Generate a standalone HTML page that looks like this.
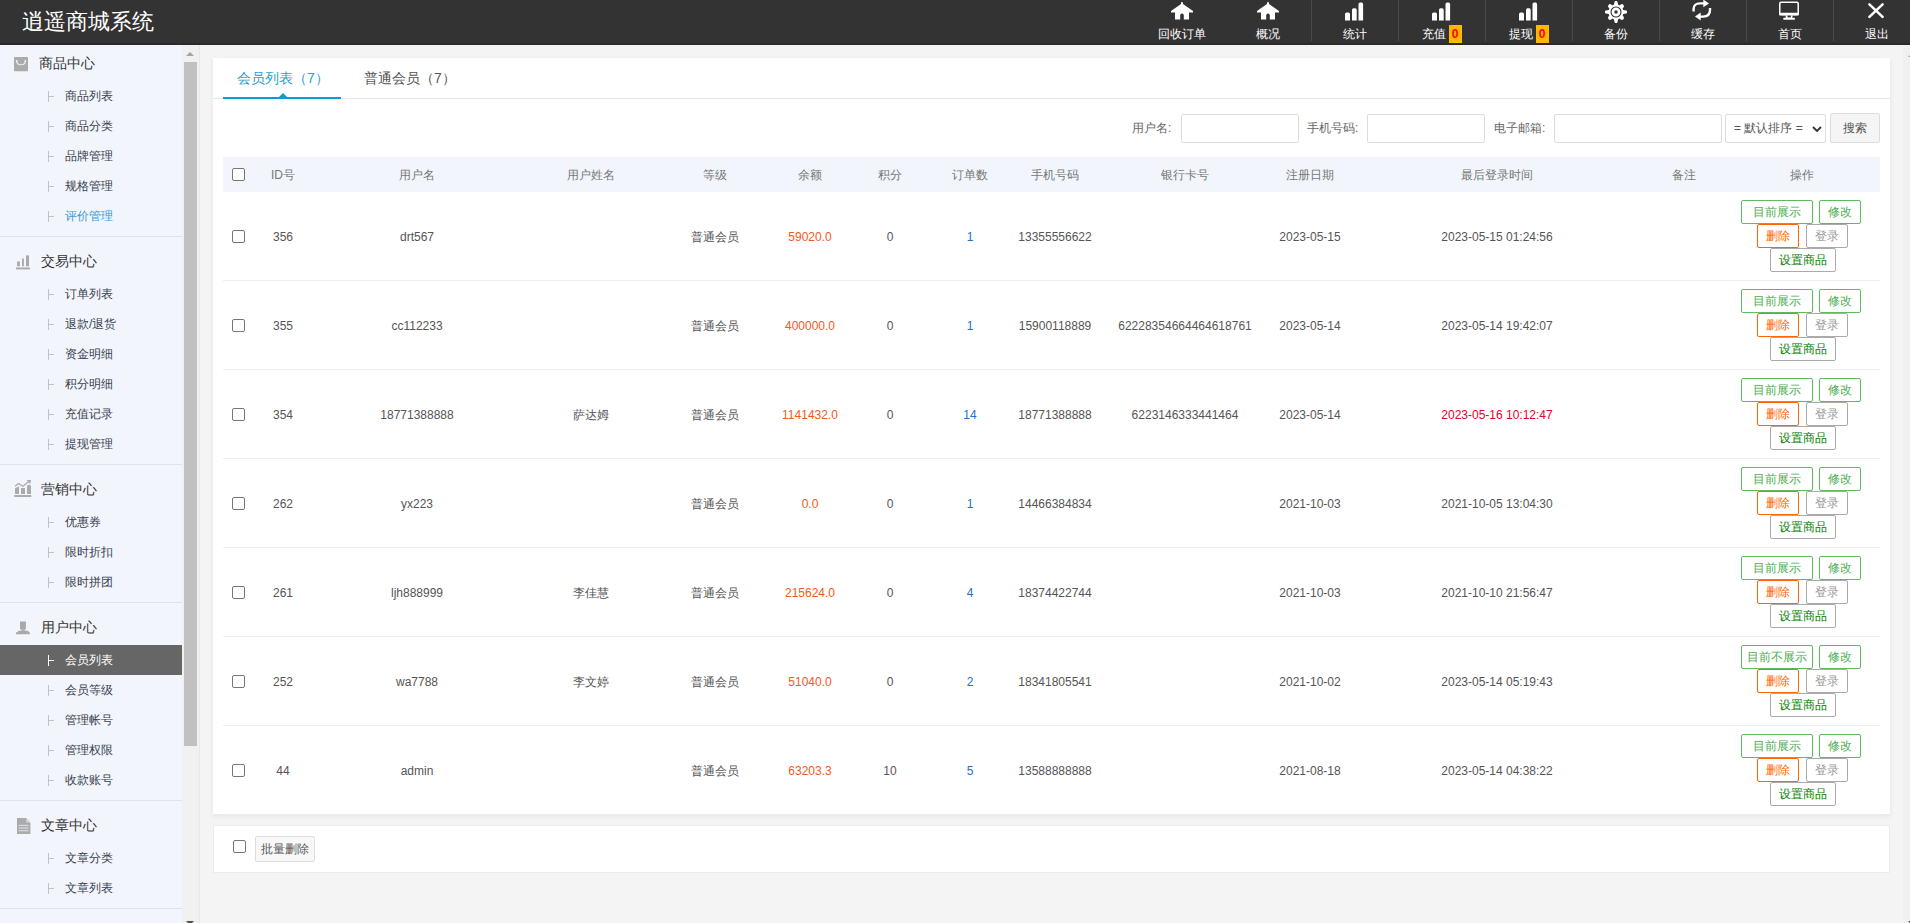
<!DOCTYPE html>
<html><head><meta charset="utf-8">
<style>
*{margin:0;padding:0;box-sizing:border-box}
html,body{width:1910px;height:923px;overflow:hidden;background:#f4f4f4;font-family:"Liberation Sans",sans-serif;font-size:12px;color:#555}
#hd{position:absolute;left:0;top:0;width:1910px;height:45px;background:#333;border-bottom:2px solid #2a2a2a}
#logo{position:absolute;left:22px;top:7px;font-size:22px;line-height:30px;color:#fff;letter-spacing:0}
.nv{position:absolute;top:0;width:87px;height:45px;text-align:center;color:#fff}
.nv .ic{position:absolute;left:0;top:0;width:87px;height:24px}
.nv .tx{position:absolute;left:0;top:26px;width:87px;font-size:12px;line-height:16px;color:#fff}
.nv .bd{display:inline-block;width:13px;height:18px;background:#ffb800;color:#f00;font-size:12px;line-height:19px;text-align:center;vertical-align:middle;margin-left:3px;position:relative;top:-1px}
.sep{position:absolute;top:0;width:1px;height:41px;background:#4a4a4a}
#sb{position:absolute;left:0;top:45px;width:182px;height:878px;background:#f2f5fc;overflow:hidden}
#sbin{position:absolute;left:0;top:-6px;width:182px}
.grp{border-bottom:1px solid #dde3ee;padding-bottom:5px}
.gh{position:relative;height:42px}
.gh .gi{position:absolute;left:14px;top:18px;width:16px;height:15px}
.gh .gt{position:absolute;left:41px;top:14px;font-size:14px;line-height:20px;color:#333}
.it{position:relative;height:30px;line-height:30px;color:#39414f;font-size:12px}
.it .tr{position:absolute;left:48px;top:10px;width:1px;height:11px;background:#c2c2c2}
.it .tr:after{content:'';position:absolute;left:1px;top:5px;width:5px;height:1px;background:#c2c2c2}
.it .tt{position:absolute;left:65px;top:0}
.it.on{background:#666;color:#fff}
.it.on .tr,.it.on .tr:after{background:#fff}
.it.bl .tt{color:#3a9bd9}
#sbtrack{position:absolute;left:182px;top:45px;width:17px;height:878px;background:#f1f1f1}
#sbthumb{position:absolute;left:184px;top:62px;width:13px;height:684px;background:#c1c1c1}
#sbline{position:absolute;left:199px;top:45px;width:1px;height:878px;background:#e3e8f1}
#rtrack{position:absolute;left:1903px;top:45px;width:7px;height:878px;background:#f0f0f0}
.card{position:absolute;left:213px;width:1677px;background:#fff;box-shadow:0 1px 3px rgba(0,0,0,.06)}
#c1{top:58px;height:756px}
#c2{top:825px;height:48px}
.tabs{position:absolute;left:0;top:0;width:1677px;height:41px;border-bottom:1px solid #e6e6e6}
.tab{position:absolute;top:10px;font-size:14px;line-height:20px;color:#555}
.tab.on{color:#1e9fd6}
.tabline{position:absolute;left:10px;top:39px;width:118px;height:2px;background:#0e9ad4}
.tabtri{position:absolute;left:65.5px;top:35px;width:0;height:0;border-left:4px solid transparent;border-right:4px solid transparent;border-bottom:4px solid #0e9ad4}
.lbl{position:absolute;top:62px;font-size:12px;line-height:16px;color:#666}
.inp{position:absolute;top:56px;height:29px;border:1px solid #ddd;border-radius:2px;background:#fff}
.sel{position:absolute;left:1512px;top:56px;width:101px;height:29px;border:1px solid #ddd;border-radius:2px;background:#fff;font-size:12px;line-height:27px;color:#555;padding-left:8px}
.btn{position:absolute;left:1617px;top:55px;width:50px;height:30px;border:1px solid #ddd;border-radius:2px;background:#f5f5f5;text-align:center;line-height:28px;color:#555}
table{position:absolute;left:10px;top:99px;border-collapse:collapse;table-layout:fixed;width:1657px}
th{height:35px;background:#f2f6fc;font-weight:normal;color:#777;text-align:center;font-size:12px}
td{height:88px;border-bottom:1px solid #eee;text-align:center;font-size:12px;color:#555}
.cb{display:inline-block;width:13px;height:13px;border:1px solid #767676;border-radius:2px;background:#fff;vertical-align:middle}
.or{color:#f4581d}
.bl2{color:#1f6fc5}
.rd{color:#e4002b}
.ops{position:relative;height:88px}
.b{position:absolute;height:24px;border:1px solid;border-radius:2px;text-align:center;line-height:22px;font-size:12px;background:#fff}
.bg{border-color:#5fba5f;color:#4caf50}
.bo{border-color:#f60;color:#f60}
.bz{border-color:#aaa;color:#999}
.bdg{border-color:#aaa;color:#008000}
th .cb{position:relative;top:-2px}
.nv .bd{font-weight:bold}
td{padding-top:2px}
td .ops{margin-top:-2px}
td .cb{position:relative;top:-1px}
th{padding-top:2px}
#c1{box-shadow:0 2px 5px rgba(0,0,0,.07)}
#c2{box-shadow:none;border:1px solid #ececec;height:48px}
</style></head><body>
<div id="hd"><div id="logo">逍遥商城系统</div>
<div class="nv" style="left:1138px"><div class="tx">回收订单</div></div><div style="position:absolute;left:1171px;top:1.5px;line-height:0"><svg width="22" height="19" viewBox="0 0 22 19"><path d="M10 0.3 H12 V2 L22 9 V10.5 H18 V17.5 H12.8 V13.2 A1.8 1.8 0 0 0 9.2 13.2 V17.5 H4 V10.5 H0 V9 L10 2 Z" fill="#fff"/></svg></div>
<div class="nv" style="left:1224px"><div class="tx">概况</div></div><div style="position:absolute;left:1257px;top:1.5px;line-height:0"><svg width="22" height="19" viewBox="0 0 22 19"><path d="M10 0.3 H12 V2 L22 9 V10.5 H18 V17.5 H12.8 V13.2 A1.8 1.8 0 0 0 9.2 13.2 V17.5 H4 V10.5 H0 V9 L10 2 Z" fill="#fff"/></svg></div>
<div class="nv" style="left:1311px"><div class="tx">统计</div></div><div style="position:absolute;left:1345px;top:0px;line-height:0"><svg width="20" height="22" viewBox="0 0 20 22"><path fill="#fff" d="M0 20.5 V14.1 Q0 12.5 1.6 12.5 H3.4 Q5 12.5 5 14.1 V20.5 ZM7 20.5 V9.9 Q7 8.3 8.6 8.3 H10.1 Q11.7 8.3 11.7 9.9 V20.5 ZM13.5 20.5 V4.2 Q13.5 2.6 15.1 2.6 H16.5 Q18.1 2.6 18.1 4.2 V20.5 Z"/></svg></div>
<div class="nv" style="left:1398px"><div class="tx">充值<span class="bd">0</span></div></div><div style="position:absolute;left:1432px;top:0px;line-height:0"><svg width="20" height="22" viewBox="0 0 20 22"><path fill="#fff" d="M0 20.5 V14.1 Q0 12.5 1.6 12.5 H3.4 Q5 12.5 5 14.1 V20.5 ZM7 20.5 V9.9 Q7 8.3 8.6 8.3 H10.1 Q11.7 8.3 11.7 9.9 V20.5 ZM13.5 20.5 V4.2 Q13.5 2.6 15.1 2.6 H16.5 Q18.1 2.6 18.1 4.2 V20.5 Z"/></svg></div>
<div class="nv" style="left:1485px"><div class="tx">提现<span class="bd">0</span></div></div><div style="position:absolute;left:1519px;top:0px;line-height:0"><svg width="20" height="22" viewBox="0 0 20 22"><path fill="#fff" d="M0 20.5 V14.1 Q0 12.5 1.6 12.5 H3.4 Q5 12.5 5 14.1 V20.5 ZM7 20.5 V9.9 Q7 8.3 8.6 8.3 H10.1 Q11.7 8.3 11.7 9.9 V20.5 ZM13.5 20.5 V4.2 Q13.5 2.6 15.1 2.6 H16.5 Q18.1 2.6 18.1 4.2 V20.5 Z"/></svg></div>
<div class="nv" style="left:1572px"><div class="tx">备份</div></div><div style="position:absolute;left:1603.6px;top:0px;line-height:0"><svg width="24" height="24" viewBox="-12 -12 24 24"><g fill="#fff"><circle r="7.6"/><path d="M-2.3 -6.5 L2.3 -6.5 L1.2 -11 L-1.2 -11 Z" transform="rotate(0)"/><path d="M-2.3 -6.5 L2.3 -6.5 L1.2 -11 L-1.2 -11 Z" transform="rotate(90)"/><path d="M-2.3 -6.5 L2.3 -6.5 L1.2 -11 L-1.2 -11 Z" transform="rotate(180)"/><path d="M-2.3 -6.5 L2.3 -6.5 L1.2 -11 L-1.2 -11 Z" transform="rotate(270)"/><g transform="rotate(45)"><circle cx="0" cy="-8.4" r="2"/><rect x="-2" y="-8.4" width="4" height="3"/></g><g transform="rotate(135)"><circle cx="0" cy="-8.4" r="2"/><rect x="-2" y="-8.4" width="4" height="3"/></g><g transform="rotate(225)"><circle cx="0" cy="-8.4" r="2"/><rect x="-2" y="-8.4" width="4" height="3"/></g><g transform="rotate(315)"><circle cx="0" cy="-8.4" r="2"/><rect x="-2" y="-8.4" width="4" height="3"/></g></g><circle r="5" fill="none" stroke="#333" stroke-width="1.1"/><circle r="1.7" fill="#333"/></svg></div>
<div class="nv" style="left:1659px"><div class="tx">缓存</div></div><div style="position:absolute;left:1688px;top:0px;line-height:0"><svg width="24" height="22" viewBox="0 0 24 22"><g fill="none" stroke="#fff" stroke-width="2.4"><path d="M5.6 11.5 V9 C5.6 5.5 8 3.4 12 3.4 H16"/><path d="M22 8 V10 C22 14 19.5 16.6 15 16.6 H12"/></g><g fill="#fff"><path d="M15.3 -0.5 L21 3.4 L15.3 7.3 Z"/><path d="M12.7 12.6 L7 16.6 L12.7 20.6 Z"/></g></svg></div>
<div class="nv" style="left:1746px"><div class="tx">首页</div></div><div style="position:absolute;left:1774px;top:0px;line-height:0"><svg width="26" height="21" viewBox="0 0 26 21"><rect x="5.8" y="2.2" width="18.4" height="12.4" rx="1.2" fill="none" stroke="#fff" stroke-width="1.5"/><rect x="5.1" y="12.8" width="19.8" height="2.8" rx="1" fill="#fff"/><path d="M11.5 15.4 H18.6 L18.2 18.2 H11.9 Z" fill="#fff"/><rect x="13.5" y="15.6" width="3.4" height="1.9" fill="#333"/><rect x="9.2" y="17.8" width="11.8" height="2" rx="0.8" fill="#fff"/></svg></div>
<div class="nv" style="left:1833px"><div class="tx">退出</div></div><div style="position:absolute;left:1862px;top:0px;line-height:0"><svg width="28" height="22" viewBox="0 0 28 22"><path d="M7.4 4.3 L20.6 16.8 M20.6 4.3 L7.4 16.8" stroke="#fff" stroke-width="2.5" stroke-linecap="round"/></svg></div>
<div class="sep" style="left:1311px"></div>
<div class="sep" style="left:1398px"></div>
<div class="sep" style="left:1485px"></div>
<div class="sep" style="left:1572px"></div>
<div class="sep" style="left:1659px"></div>
<div class="sep" style="left:1746px"></div>
<div class="sep" style="left:1833px"></div>
</div>
<div id="sb"><div id="sbin">
<div class="grp"><div class="gh"><div class="gi" style="left:14px;top:17.8px"><svg width="14" height="15" viewBox="0 0 14 15"><rect x="0" y="0" width="14" height="14.2" rx="0.8" fill="#ababab"/><path d="M2.7 4.2 C2.9 9, 11.1 9, 11.3 4.2" fill="none" stroke="#f2f5fc" stroke-width="1.1"/><circle cx="2.7" cy="4" r="0.9" fill="#f2f5fc"/><circle cx="11.3" cy="4" r="0.9" fill="#f2f5fc"/></svg></div><div class="gt" style="left:39px">商品中心</div></div>
<div class="it"><span class="tr"></span><span class="tt">商品列表</span></div>
<div class="it"><span class="tr"></span><span class="tt">商品分类</span></div>
<div class="it"><span class="tr"></span><span class="tt">品牌管理</span></div>
<div class="it"><span class="tr"></span><span class="tt">规格管理</span></div>
<div class="it bl"><span class="tr"></span><span class="tt">评价管理</span></div>
</div>
<div class="grp"><div class="gh"><div class="gi" style="left:16px;top:17.5px"><svg width="14" height="15" viewBox="0 0 14 15"><g fill="#a9a9a9"><rect x="1.1" y="6.4" width="2.8" height="4.9"/><rect x="6" y="3.5" width="1.9" height="7.8"/><rect x="10" y="0.4" width="3" height="10.9"/><rect x="0" y="12.5" width="13.9" height="1.9"/></g></svg></div><div class="gt" style="left:41px">交易中心</div></div>
<div class="it"><span class="tr"></span><span class="tt">订单列表</span></div>
<div class="it"><span class="tr"></span><span class="tt">退款/退货</span></div>
<div class="it"><span class="tr"></span><span class="tt">资金明细</span></div>
<div class="it"><span class="tr"></span><span class="tt">积分明细</span></div>
<div class="it"><span class="tr"></span><span class="tt">充值记录</span></div>
<div class="it"><span class="tr"></span><span class="tt">提现管理</span></div>
</div>
<div class="grp"><div class="gh"><div class="gi" style="left:14px;top:15px"><svg width="18" height="18" viewBox="0 0 18 18"><g fill="#ababab"><path d="M1 8.3 L5 6.3 V14 H1 Z"/><rect x="7" y="8" width="4" height="6"/><path d="M13 5.8 Q15 3.8 17 5.8 V14 H13 Z"/><rect x="0.3" y="15" width="17" height="2"/><path d="M12.6 0 L17 0 L16.3 3.9 Z"/></g><path d="M1 6.2 L4.5 3.6 L9 6.3 L15 1.2" fill="none" stroke="#ababab" stroke-width="1.3"/></svg></div><div class="gt" style="left:41px">营销中心</div></div>
<div class="it"><span class="tr"></span><span class="tt">优惠券</span></div>
<div class="it"><span class="tr"></span><span class="tt">限时折扣</span></div>
<div class="it"><span class="tr"></span><span class="tt">限时拼团</span></div>
</div>
<div class="grp"><div class="gh"><div class="gi" style="left:16px;top:17.5px"><svg width="14" height="14" viewBox="0 0 14 14"><g fill="#a9a9a9"><rect x="4" y="0.5" width="5.9" height="7.8"/><rect x="5.3" y="8.2" width="3.6" height="1.6"/><path d="M2 9.7 H11.8 L13.9 11.8 V13.3 H0 V11.2 H2 Z"/></g></svg></div><div class="gt" style="left:41px">用户中心</div></div>
<div class="it on"><span class="tr"></span><span class="tt">会员列表</span></div>
<div class="it"><span class="tr"></span><span class="tt">会员等级</span></div>
<div class="it"><span class="tr"></span><span class="tt">管理帐号</span></div>
<div class="it"><span class="tr"></span><span class="tt">管理权限</span></div>
<div class="it"><span class="tr"></span><span class="tt">收款账号</span></div>
</div>
<div class="grp"><div class="gh"><div class="gi" style="left:16.5px;top:17px"><svg width="14" height="16" viewBox="0 0 14 16"><path d="M0 0 H9 L13.4 4.7 V16 H0 Z" fill="#ababab"/><path d="M9.3 0.4 L13 4.4 H9.3 Z" fill="#d6d8dc"/><g fill="#d8dbe2"><rect x="1.7" y="6.8" width="9.8" height="1.2"/><rect x="1.7" y="9.4" width="9.8" height="1.2"/><rect x="1.7" y="12.1" width="9.8" height="1.2"/></g></svg></div><div class="gt" style="left:41px">文章中心</div></div>
<div class="it"><span class="tr"></span><span class="tt">文章分类</span></div>
<div class="it"><span class="tr"></span><span class="tt">文章列表</span></div>
</div>
<div class="grp"><div class="gh"><div class="gi" style="left:17px;top:18px"><svg width="14" height="16" viewBox="0 0 14 16"><path d="M0 0 H9 L13.4 4.7 V16 H0 Z" fill="#ababab"/><path d="M9.3 0.4 L13 4.4 H9.3 Z" fill="#d6d8dc"/><g fill="#d8dbe2"><rect x="1.7" y="6.8" width="9.8" height="1.2"/><rect x="1.7" y="9.4" width="9.8" height="1.2"/><rect x="1.7" y="12.1" width="9.8" height="1.2"/></g></svg></div><div class="gt" style="left:41px">系统设置</div></div>
<div class="it"><span class="tr"></span><span class="tt">基本设置</span></div>
<div class="it"><span class="tr"></span><span class="tt">支付设置</span></div>
</div>
</div></div>
<div id="sbtrack"></div><div id="sbthumb"></div><div id="sbline"></div>
<div style="position:absolute;left:186px;top:52px;width:0;height:0;border-left:4.5px solid transparent;border-right:4.5px solid transparent;border-bottom:4px solid #a3a3a3"></div>
<div style="position:absolute;left:186px;top:921px;width:0;height:0;border-left:4.5px solid transparent;border-right:4.5px solid transparent;border-top:4px solid #505050"></div>
<div id="rtrack"></div>
<div style="position:absolute;left:1908px;top:53px;width:0;height:0;border-left:4.5px solid transparent;border-right:4.5px solid transparent;border-bottom:4px solid #a3a3a3"></div>
<div style="position:absolute;left:1908px;top:921px;width:0;height:0;border-left:4.5px solid transparent;border-right:4.5px solid transparent;border-top:4px solid #505050"></div>
<div class="card" id="c1">
<div class="tabs"><div class="tab on" style="left:24px">会员列表（7）</div><div class="tab" style="left:151px">普通会员（7）</div><div class="tabline"></div><div class="tabtri"></div></div>
<div class="lbl" style="left:919px">用户名:</div><div class="inp" style="left:968px;width:118px"></div>
<div class="lbl" style="left:1094px">手机号码:</div><div class="inp" style="left:1154px;width:118px"></div>
<div class="lbl" style="left:1281px">电子邮箱:</div><div class="inp" style="left:1341px;width:168px"></div>
<div class="sel">= 默认排序 =<svg style="position:absolute;left:86px;top:11px" width="10" height="7" viewBox="0 0 10 7"><path d="M1 1 L5 5 L9 1" fill="none" stroke="#333" stroke-width="1.8"/></svg></div>
<div class="btn">搜索</div>
<table><colgroup><col style="width:30px"><col style="width:60px"><col style="width:208px"><col style="width:140px"><col style="width:108px"><col style="width:82px"><col style="width:78px"><col style="width:82px"><col style="width:88px"><col style="width:172px"><col style="width:78px"><col style="width:296px"><col style="width:78px"><col style="width:157px"></colgroup>
<tr><th><span class="cb"></span></th><th>ID号</th><th>用户名</th><th>用户姓名</th><th>等级</th><th>余额</th><th>积分</th><th>订单数</th><th>手机号码</th><th>银行卡号</th><th>注册日期</th><th>最后登录时间</th><th>备注</th><th>操作</th></tr>
<tr><td><span class="cb"></span></td><td>356</td><td>drt567</td><td></td><td>普通会员</td><td><span class="or">59020.0</span></td><td>0</td><td><span class="bl2">1</span></td><td>13355556622</td><td></td><td>2023-05-15</td><td>2023-05-15 01:24:56</td><td></td><td><div class="ops"><div class="b bg" style="left:18px;top:8px;width:72px">目前展示</div><div class="b bg" style="left:96px;top:8px;width:42px">修改</div><div class="b bo" style="left:34px;top:32px;width:42px">删除</div><div class="b bz" style="left:83px;top:32px;width:42px">登录</div><div class="b bdg" style="left:47px;top:56px;width:66px">设置商品</div></div></td></tr>
<tr><td><span class="cb"></span></td><td>355</td><td>cc112233</td><td></td><td>普通会员</td><td><span class="or">400000.0</span></td><td>0</td><td><span class="bl2">1</span></td><td>15900118889</td><td>62228354664464618761</td><td>2023-05-14</td><td>2023-05-14 19:42:07</td><td></td><td><div class="ops"><div class="b bg" style="left:18px;top:8px;width:72px">目前展示</div><div class="b bg" style="left:96px;top:8px;width:42px">修改</div><div class="b bo" style="left:34px;top:32px;width:42px">删除</div><div class="b bz" style="left:83px;top:32px;width:42px">登录</div><div class="b bdg" style="left:47px;top:56px;width:66px">设置商品</div></div></td></tr>
<tr><td><span class="cb"></span></td><td>354</td><td>18771388888</td><td>萨达姆</td><td>普通会员</td><td><span class="or">1141432.0</span></td><td>0</td><td><span class="bl2">14</span></td><td>18771388888</td><td>6223146333441464</td><td>2023-05-14</td><td><span class="rd">2023-05-16 10:12:47</span></td><td></td><td><div class="ops"><div class="b bg" style="left:18px;top:8px;width:72px">目前展示</div><div class="b bg" style="left:96px;top:8px;width:42px">修改</div><div class="b bo" style="left:34px;top:32px;width:42px">删除</div><div class="b bz" style="left:83px;top:32px;width:42px">登录</div><div class="b bdg" style="left:47px;top:56px;width:66px">设置商品</div></div></td></tr>
<tr><td><span class="cb"></span></td><td>262</td><td>yx223</td><td></td><td>普通会员</td><td><span class="or">0.0</span></td><td>0</td><td><span class="bl2">1</span></td><td>14466384834</td><td></td><td>2021-10-03</td><td>2021-10-05 13:04:30</td><td></td><td><div class="ops"><div class="b bg" style="left:18px;top:8px;width:72px">目前展示</div><div class="b bg" style="left:96px;top:8px;width:42px">修改</div><div class="b bo" style="left:34px;top:32px;width:42px">删除</div><div class="b bz" style="left:83px;top:32px;width:42px">登录</div><div class="b bdg" style="left:47px;top:56px;width:66px">设置商品</div></div></td></tr>
<tr><td><span class="cb"></span></td><td>261</td><td>ljh888999</td><td>李佳慧</td><td>普通会员</td><td><span class="or">215624.0</span></td><td>0</td><td><span class="bl2">4</span></td><td>18374422744</td><td></td><td>2021-10-03</td><td>2021-10-10 21:56:47</td><td></td><td><div class="ops"><div class="b bg" style="left:18px;top:8px;width:72px">目前展示</div><div class="b bg" style="left:96px;top:8px;width:42px">修改</div><div class="b bo" style="left:34px;top:32px;width:42px">删除</div><div class="b bz" style="left:83px;top:32px;width:42px">登录</div><div class="b bdg" style="left:47px;top:56px;width:66px">设置商品</div></div></td></tr>
<tr><td><span class="cb"></span></td><td>252</td><td>wa7788</td><td>李文婷</td><td>普通会员</td><td><span class="or">51040.0</span></td><td>0</td><td><span class="bl2">2</span></td><td>18341805541</td><td></td><td>2021-10-02</td><td>2023-05-14 05:19:43</td><td></td><td><div class="ops"><div class="b bg" style="left:18px;top:8px;width:72px">目前不展示</div><div class="b bg" style="left:96px;top:8px;width:42px">修改</div><div class="b bo" style="left:34px;top:32px;width:42px">删除</div><div class="b bz" style="left:83px;top:32px;width:42px">登录</div><div class="b bdg" style="left:47px;top:56px;width:66px">设置商品</div></div></td></tr>
<tr><td><span class="cb"></span></td><td>44</td><td>admin</td><td></td><td>普通会员</td><td><span class="or">63203.3</span></td><td>10</td><td><span class="bl2">5</span></td><td>13588888888</td><td></td><td>2021-08-18</td><td>2023-05-14 04:38:22</td><td></td><td><div class="ops"><div class="b bg" style="left:18px;top:8px;width:72px">目前展示</div><div class="b bg" style="left:96px;top:8px;width:42px">修改</div><div class="b bo" style="left:34px;top:32px;width:42px">删除</div><div class="b bz" style="left:83px;top:32px;width:42px">登录</div><div class="b bdg" style="left:47px;top:56px;width:66px">设置商品</div></div></td></tr>
</table></div>
<div class="card" id="c2"><span class="cb" style="position:absolute;left:19px;top:14px"></span><div style="position:absolute;left:41px;top:10px;width:60px;height:26px;border:1px solid #ddd;border-radius:2px;background:#f8f8f8;text-align:center;line-height:24px;color:#555">批量删除</div></div>
</body></html>
